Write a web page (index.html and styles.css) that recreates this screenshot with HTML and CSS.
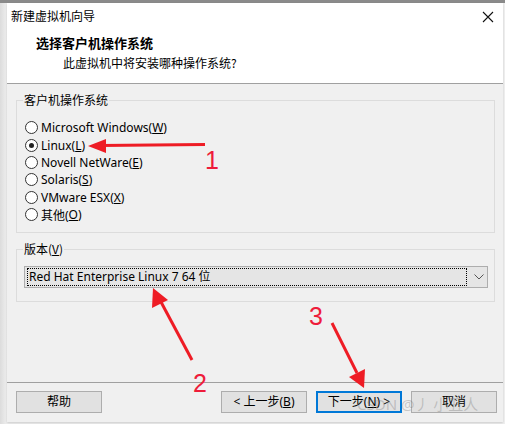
FILE: index.html
```html
<!DOCTYPE html>
<html lang="zh">
<head>
<meta charset="utf-8">
<title>新建虚拟机向导</title>
<link rel="stylesheet" href="styles.css">
</head>
<body>
<div class="desk">
  <div class="topstrip"></div>
  <div class="window">
    <div class="titlebar">
      <span class="title">新建虚拟机向导</span>
      <svg class="close" width="12" height="12" viewBox="0 0 12 12"><path d="M1 1 L11 11 M11 1 L1 11" stroke="#111" stroke-width="1.1" fill="none"/></svg>
    </div>
    <div class="header">
      <div class="heading">选择客户机操作系统</div>
      <div class="sub">此虚拟机中将安装哪种操作系统?</div>
    </div>
    <div class="content">
      <fieldset class="group os">
        <legend>客户机操作系统</legend>
        <label class="radio"><span class="dot"></span>Microsoft Windows(<u>W</u>)</label>
        <label class="radio"><span class="dot on"></span>Linux(<u>L</u>)</label>
        <label class="radio"><span class="dot"></span>Novell NetWare(<u>E</u>)</label>
        <label class="radio"><span class="dot"></span>Solaris(<u>S</u>)</label>
        <label class="radio"><span class="dot"></span>VMware ESX(<u>X</u>)</label>
        <label class="radio"><span class="dot"></span>其他(<u>O</u>)</label>
      </fieldset>
      <fieldset class="group ver">
        <legend>版本(<u>V</u>)</legend>
        <div class="select">
          <div class="focus">Red Hat Enterprise Linux 7 64 位</div>
          <svg class="chev" width="10" height="6" viewBox="0 0 10 6"><path d="M0.5 0.5 L5 5 L9.5 0.5" stroke="#555" stroke-width="1" fill="none"/></svg>
        </div>
      </fieldset>
    </div>
    <div class="footer">
      <button class="btn">帮助</button>
      <div class="spacer"></div>
      <button class="btn">&lt; 上一步(<u>B</u>)</button>
      <button class="btn primary">下一步(<u>N</u>) &gt;</button>
      <button class="btn">取消</button>
    </div>
  </div>
  <div class="watermark">CSDN @丿 小丑人</div>
  <svg class="marks" width="505" height="424" viewBox="0 0 505 424">
    <g fill="#ee1c25" stroke="#ee1c25">
      <line x1="205" y1="144.5" x2="100" y2="145.5" stroke-width="3"/>
      <polygon points="88,146 106,139 106,153" stroke="none"/>
      <line x1="192" y1="360" x2="161" y2="302" stroke-width="3"/>
      <polygon points="153,288 152,308 168,300" stroke="none"/>
      <line x1="332" y1="323" x2="357" y2="373" stroke-width="3"/>
      <polygon points="364,388 349,377 365,369" stroke="none"/>
    </g>
    <g class="num" fill="#ee1c3a">
      <text x="205" y="169">1</text>
      <text x="193" y="392">2</text>
      <text x="309" y="325">3</text>
    </g>
  </svg>
</div>
</body>
</html>
```
FILE: styles.css
```css
html, body {
  margin: 0;
  padding: 0;
}
body {
  width: 505px;
  height: 424px;
  overflow: hidden;
  background: #e9e9e9;
  font-family: "Noto Sans", "Noto Sans CJK SC", sans-serif;
  font-size: 12px;
  color: #000;
}
.desk {
  position: relative;
  width: 505px;
  height: 424px;
  background: linear-gradient(to right, #dcdcdc, #efefef 7px);
}
.topstrip {
  height: 3px;
  background: #8a8a8a;
}
.window {
  margin-left: 7px;
  width: 496px;
  height: 419px;
  display: flex;
  flex-direction: column;
  background: #f0f0f0;
  box-shadow: 0 1px 2px rgba(0,0,0,0.15);
}
.titlebar {
  height: 27px;
  background: #fff;
  display: flex;
  align-items: center;
  justify-content: space-between;
  padding: 0 8px 0 4px;
}
.title {
  font-family: "Noto Sans CJK SC", sans-serif;
  font-size: 12px;
  line-height: 16px;
  margin-top: -2px;
}
.close {
  margin-right: 1px;
}
.header {
  height: 53px;
  background: #fff;
  border-bottom: 1px solid #a0a0a0;
  box-sizing: content-box;
}
.heading {
  font-family: "Noto Sans CJK SC", sans-serif;
  font-weight: bold;
  font-size: 13px;
  line-height: 18px;
  padding: 4px 0 0 29px;
}
.sub {
  font-family: "Noto Sans CJK SC", sans-serif;
  font-size: 12px;
  line-height: 18px;
  padding: 2px 0 0 56px;
}
.content {
  flex: 1;
  padding: 0 8px 0 9px;
}
.group {
  margin: 8px 0 0 0;
  border: 1px solid #dcdcdc;
  border-radius: 0;
  padding: 0 6px 0 7px;
  min-width: 0;
}
.group legend {
  padding: 0 1px;
  margin-left: -1px;
  font-family: "Noto Sans CJK SC", sans-serif;
  font-size: 12px;
  line-height: 16px;
}
.os {
  padding-top: 11px;
  padding-bottom: 8px;
  height: 141px;
  box-sizing: border-box;
}
.radio {
  display: flex;
  align-items: center;
  height: 17.4px;
  font-size: 12px;
  white-space: nowrap;
  margin-left: 1px;
}
.dot {
  width: 11px;
  height: 11px;
  border: 1px solid #333;
  border-radius: 50%;
  background: #fff;
  margin-right: 3px;
  box-sizing: content-box;
  position: relative;
  flex: none;
}
.dot.on::after {
  content: "";
  position: absolute;
  left: 3px;
  top: 3px;
  width: 5px;
  height: 5px;
  border-radius: 50%;
  background: #222;
}
.ver {
  padding-top: 9px;
  padding-bottom: 12px;
  height: 61px;
  box-sizing: border-box;
}
.select {
  height: 22px;
  box-sizing: border-box;
  border: 1px solid #adadad;
  background: #e5e5e5;
  display: flex;
  align-items: center;
  padding: 0 3px 0 2px;
}
.focus {
  flex: 1;
  height: 16px;
  line-height: 16px;
  border: 1px dotted #000;
  padding-left: 1px;
  margin-right: 7px;
  font-size: 12px;
  white-space: nowrap;
}
.chev {
  flex: none;
}
.footer {
  height: 40px;
  border-top: 1px solid #a0a0a0;
  box-sizing: border-box;
  display: flex;
  align-items: flex-start;
  padding: 8px 6px 0 9px;
  gap: 9px;
}
.spacer {
  flex: 1;
}
.btn {
  width: 86px;
  height: 22px;
  box-sizing: border-box;
  border: 1px solid #adadad;
  background: #e1e1e1;
  font-family: "Noto Sans", "Noto Sans CJK SC", sans-serif;
  font-size: 12px;
  padding: 0;
  color: #000;
  line-height: 18px;
}
.btn.primary {
  border: 2px solid #0078d7;
}
.watermark {
  position: absolute;
  left: 357px;
  top: 393px;
  font-size: 15px;
  color: rgba(120,120,120,0.35);
  white-space: nowrap;
  font-family: "Noto Sans", "Noto Sans CJK SC", sans-serif;
  pointer-events: none;
}
.marks {
  position: absolute;
  left: 0;
  top: 0;
  pointer-events: none;
}
.num {
  font-family: "Liberation Sans", sans-serif;
  font-size: 25px;
}
```
